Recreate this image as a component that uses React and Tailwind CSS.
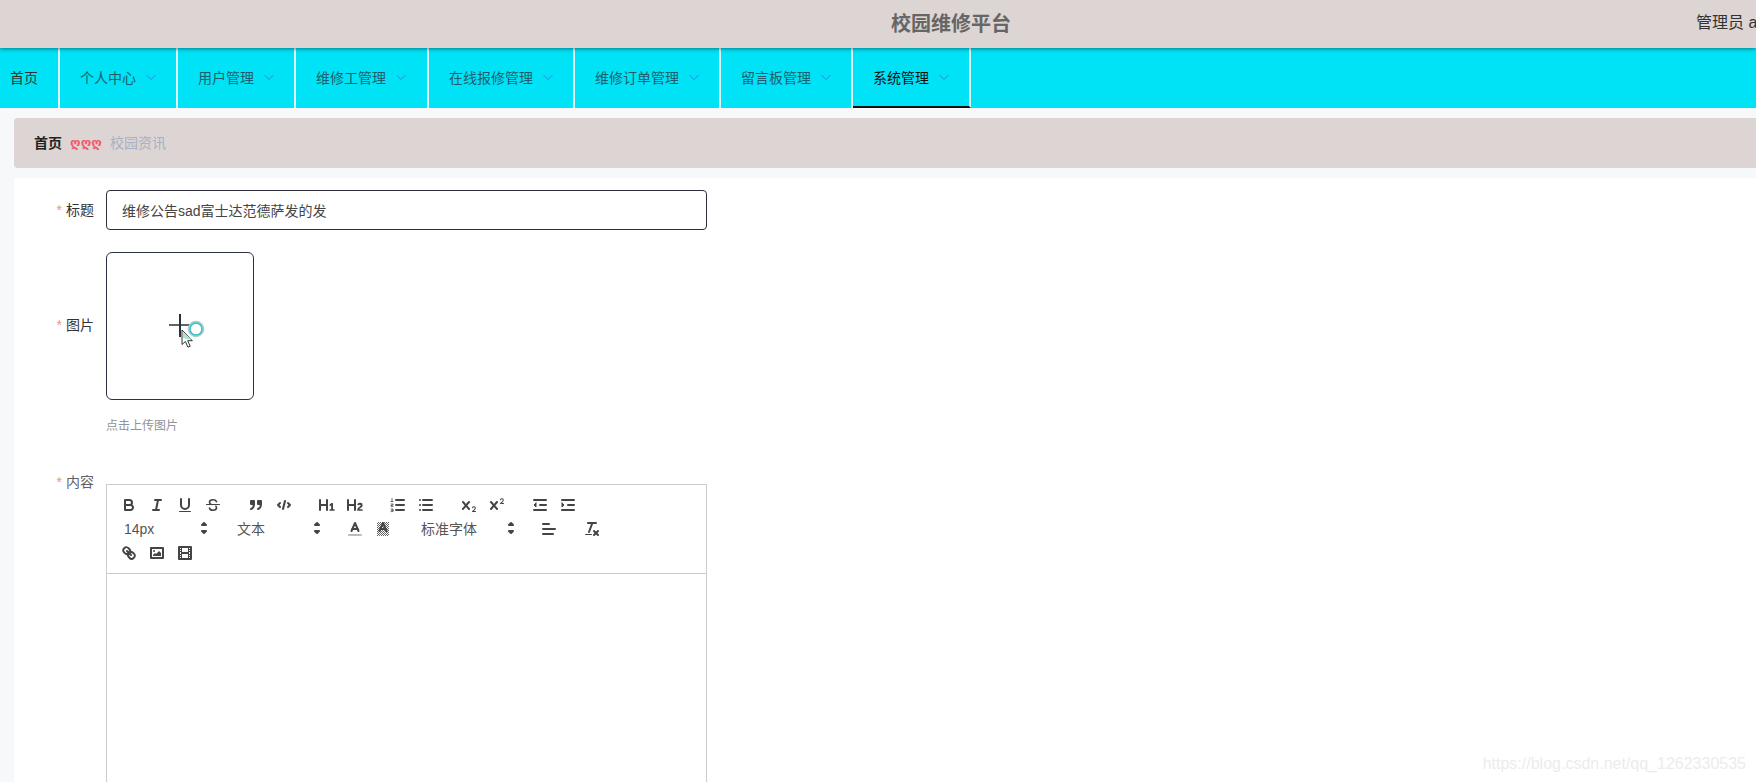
import React from 'react';

const fontStack = 'font-["Liberation_Sans","Noto_Sans_CJK_SC",sans-serif]';

const navItems = [
  { label: '个人中心', padding: 'px-5' },
  { label: '用户管理', padding: 'px-5' },
  { label: '维修工管理', padding: 'pl-5 pr-[21px]' },
  { label: '在线报修管理', padding: 'px-5' },
  { label: '维修订单管理', padding: 'px-5' },
  { label: '留言板管理', padding: 'px-5' },
  { label: '系统管理', padding: 'px-5', active: true }
];

const Chevron = () => (
  <svg width="10" height="10" viewBox="0 0 10 10" fill="none" stroke="#2f86e8" strokeWidth="1" className="-mt-[3px]">
    <polyline points="0.5 3 5 7.5 9.5 3" />
  </svg>
);

const Icon = ({ children }) => (
  <button className="w-7 h-6 px-[5px] py-[3px] shrink-0">
    <svg
      viewBox="0 0 18 18"
      width="18"
      height="18"
      fill="none"
      stroke="#444"
      strokeWidth="2"
      strokeLinecap="round"
      strokeLinejoin="round"
    >
      {children}
    </svg>
  </button>
);

const Solid = ({ d }) => <path d={d} fill="#444" stroke="none" />;

const Picker = ({ label, width }) => (
  <span className={`relative h-6 flex items-center pl-[9px] text-sm leading-6 text-[#555] ${width}`}>
    {label}
    <svg viewBox="0 0 18 18" width="18" height="18" className="absolute right-0 top-[3px]" fill="#444" stroke="#444" strokeWidth="2" strokeLinejoin="round">
      <polygon points="7 11 9 13 11 11 7 11" />
      <polygon points="7 5 9 3 11 5 7 5" />
    </svg>
  </span>
);

const Group = ({ children }) => <span className="flex mr-[15px]">{children}</span>;

const Toolbar = () => (
  <div className="border border-[#ccc] p-2 flex flex-wrap">
    <Group>
      <Icon>
        <path d="M5,4H9.5A2.5,2.5,0,0,1,12,6.5v0A2.5,2.5,0,0,1,9.5,9H5A0,0,0,0,1,5,9V4A0,0,0,0,1,5,4Z" />
        <path d="M5,9h5.5A2.5,2.5,0,0,1,13,11.5v0A2.5,2.5,0,0,1,10.5,14H5a0,0,0,0,1,0,0V9A0,0,0,0,1,5,9Z" />
      </Icon>
      <Icon>
        <line x1="7" x2="13" y1="4" y2="4" />
        <line x1="5" x2="11" y1="14" y2="14" />
        <line x1="8" x2="10" y1="14" y2="4" />
      </Icon>
      <Icon>
        <path d="M5,3V9a4.012,4.012,0,0,0,4,4H9a4.012,4.012,0,0,0,4-4V3" />
        <rect x="3" y="15" width="12" height="1" rx="0.5" ry="0.5" fill="#444" stroke="none" />
      </Icon>
      <Icon>
        <line x1="15.5" x2="2.5" y1="8.5" y2="8.5" strokeWidth="1" />
        <path strokeWidth="1.6" d="M12.5 5.6C12 4.3 10.7 3.8 9 3.8c-2 0-3.5 1-3.5 2.5 0 1 .6 1.7 1.6 2.1M5.5 12c.3 1.5 1.7 2.2 3.5 2.2 2 0 3.5-1 3.5-2.5 0-.6-.2-1.1-.6-1.5" />
      </Icon>
    </Group>
    <Group>
      <Icon>
        <rect x="4" y="5" width="3" height="3" fill="#444" />
        <rect x="11" y="5" width="3" height="3" fill="#444" />
        <path d="M7,8c0,4.031-3,5-3,5" />
        <path d="M14,8c0,4.031-3,5-3,5" />
      </Icon>
      <Icon>
        <polyline points="5 7 3 9 5 11" />
        <polyline points="13 7 15 9 13 11" />
        <line x1="10" x2="8" y1="5" y2="13" />
      </Icon>
    </Group>
    <Group>
      <Icon>
        <Solid d="M10,4V14a1,1,0,0,1-2,0V10H3v4a1,1,0,0,1-2,0V4A1,1,0,0,1,3,4V8H8V4a1,1,0,0,1,2,0Zm6.06787,9.209H14.98975V7.59863a.54085.54085,0,0,0-.605-.60547h-.62744a1.01119,1.01119,0,0,0-.748.29688L11.645,8.56641a.5435.5435,0,0,0-.022.8584l.28613.30762a.53861.53861,0,0,0,.84717.0332l.09912-.08789a1.2137,1.2137,0,0,0,.2417-.35254h.02246s-.01123.30859-.01123.60547V13.209H12.041a.54085.54085,0,0,0-.605.60547v.43945a.54085.54085,0,0,0,.605.60547h4.02686a.54085.54085,0,0,0,.605-.60547v-.43945A.54085.54085,0,0,0,16.06787,13.209Z" />
      </Icon>
      <Icon>
        <Solid d="M16.73975,13.81445v.43945a.54085.54085,0,0,1-.605.60547H11.855a.58392.58392,0,0,1-.64893-.60547V14.0127c0-2.90527,3.39941-3.42187,3.39941-4.55469a.77675.77675,0,0,0-.84717-.78125,1.17684,1.17684,0,0,0-.83594.38477c-.2749.26367-.561.374-.85791.13184l-.4292-.34082c-.30811-.24219-.38525-.51758-.1543-.81445a2.97155,2.97155,0,0,1,2.45361-1.17676,2.45393,2.45393,0,0,1,2.68408,2.40918c0,2.45312-3.1792,2.92676-3.27832,3.93848h2.79443A.54085.54085,0,0,1,16.73975,13.81445ZM9,3A.99974.99974,0,0,0,8,4V8H3V4A1,1,0,0,0,1,4V14a1,1,0,0,0,2,0V10H8v4a1,1,0,0,0,2,0V4A.99974.99974,0,0,0,9,3Z" />
      </Icon>
    </Group>
    <Group>
      <Icon>
        <line x1="7" x2="15" y1="4" y2="4" />
        <line x1="7" x2="15" y1="9" y2="9" />
        <line x1="7" x2="15" y1="14" y2="14" />
        <path strokeWidth="0.8" d="M3 2.5v3M2 5.5h2M2 8h2v1.2H2v1.2h2M2 13h2v2.6H2M2.4 14.3H4" />
      </Icon>
      <Icon>
        <line x1="6" x2="15" y1="4" y2="4" />
        <line x1="6" x2="15" y1="9" y2="9" />
        <line x1="6" x2="15" y1="14" y2="14" />
        <line x1="3" x2="3" y1="4" y2="4" />
        <line x1="3" x2="3" y1="9" y2="9" />
        <line x1="3" x2="3" y1="14" y2="14" />
      </Icon>
    </Group>
    <Group>
      <Icon>
        <Solid d="M15.5,15H13.861a3.858,3.858,0,0,0,1.914-2.975,1.8,1.8,0,0,0-1.6-1.751A1.921,1.921,0,0,0,12.021,11.7a0.50013,0.50013,0,1,0,.957.291h0a0.914,0.914,0,0,1,1.053-.725,0.81,0.81,0,0,1,.744.762c0,1.076-1.16971,1.86982-1.93971,2.43082A1.45639,1.45639,0,0,0,12,15.5a0.5,0.5,0,0,0,.5.5h3A0.5,0.5,0,0,0,15.5,15Z" />
        <Solid d="M9.65,5.241a1,1,0,0,0-1.409.108L6,7.964,3.759,5.349A1,1,0,0,0,2.192,6.59178Q2.2,6.6,2.241,6.651L4.684,9.5,2.241,12.35A1,1,0,0,0,3.71,13.70722q0.04-.04.078-0.0912L6,11.036l2.241,2.614a1,1,0,0,0,1.567-1.24277Q9.8,12.4,9.759,12.35L7.316,9.5,9.759,6.651A1,1,0,0,0,9.65,5.241Z" />
      </Icon>
      <Icon>
        <Solid d="M15.5,7H13.861a4.015,4.015,0,0,0,1.914-2.975,1.8,1.8,0,0,0-1.6-1.751A1.922,1.922,0,0,0,12.021,3.7a0.5,0.5,0,1,0,.957.291,0.917,0.917,0,0,1,1.053-.725,0.81,0.81,0,0,1,.744.762c0,1.077-1.164,1.925-1.934,2.486A1.423,1.423,0,0,0,12,7.5a0.5,0.5,0,0,0,.5.5h3A0.5,0.5,0,0,0,15.5,7Z" />
        <Solid d="M9.651,5.241a1,1,0,0,0-1.41.108L6,7.964,3.759,5.349a1,1,0,1,0-1.519,1.3L4.683,9.5,2.241,12.35a1,1,0,1,0,1.519,1.3L6,11.036l2.241,2.614a1,1,0,0,0,1.519-1.3L7.317,9.5,9.759,6.651A1,1,0,0,0,9.651,5.241Z" />
      </Icon>
    </Group>
    <Group>
      <Icon>
        <line x1="3" x2="15" y1="14" y2="14" />
        <line x1="3" x2="15" y1="4" y2="4" />
        <line x1="9" x2="15" y1="9" y2="9" />
        <polyline points="5 7 5 11 3 9 5 7" fill="#444" strokeWidth="1" />
      </Icon>
      <Icon>
        <line x1="3" x2="15" y1="14" y2="14" />
        <line x1="3" x2="15" y1="4" y2="4" />
        <line x1="9" x2="15" y1="9" y2="9" />
        <polyline points="3 7 3 11 5 9 3 7" fill="#444" strokeWidth="1" />
      </Icon>
    </Group>
    <Group><Picker label="14px" width="w-[98px]" /></Group>
    <Group><Picker label="文本" width="w-[98px]" /></Group>
    <Group>
      <Icon>
        <line x1="3" x2="15" y1="15" y2="15" stroke="#bbb" />
        <polyline points="5.5 11 9 3 12.5 11" />
        <line x1="11.63" x2="6.38" y1="9" y2="9" />
      </Icon>
      <Icon>
        <defs>
          <pattern id="dither" width="2" height="2" patternUnits="userSpaceOnUse">
            <rect width="1" height="1" fill="#666" stroke="none" />
            <rect x="1" y="1" width="1" height="1" fill="#666" stroke="none" />
          </pattern>
        </defs>
        <rect x="3" y="2" width="12" height="14" fill="url(#dither)" stroke="none" />
        <polyline points="5.5 11 9 3 12.5 11" />
        <line x1="11.63" x2="6.38" y1="9" y2="9" />
      </Icon>
    </Group>
    <Group><Picker label="标准字体" width="w-[108px]" /></Group>
    <Group>
      <Icon>
        <line x1="3" x2="15" y1="9" y2="9" />
        <line x1="3" x2="13" y1="14" y2="14" />
        <line x1="3" x2="9" y1="4" y2="4" />
      </Icon>
    </Group>
    <Group>
      <Icon>
        <line x1="5" x2="13" y1="3" y2="3" />
        <line x1="6" x2="9.35" y1="12" y2="3" />
        <line x1="11" x2="15" y1="11" y2="15" />
        <line x1="15" x2="11" y1="11" y2="15" />
        <rect x="2" y="14" width="7" height="1" rx="0.5" ry="0.5" fill="#444" stroke="none" />
      </Icon>
    </Group>
    <Group>
      <Icon>
        <line x1="7" x2="11" y1="7" y2="11" />
        <path d="M8.9,4.577a3.476,3.476,0,0,1,.36,4.679A3.476,3.476,0,0,1,4.577,8.9C3.185,7.5,2.035,6.4,4.217,4.217S7.5,3.185,8.9,4.577Z" />
        <path d="M13.423,9.1a3.476,3.476,0,0,0-4.679-.36,3.476,3.476,0,0,0,.36,4.679c1.392,1.392,2.5,2.542,4.679.36S14.815,10.5,13.423,9.1Z" />
      </Icon>
      <Icon>
        <rect x="3" y="4" width="12" height="10" />
        <circle cx="6" cy="7" r="1" fill="#444" stroke="none" />
        <polyline points="5 12 5 11 7 9 8 10 11 7 13 9 13 12 5 12" fill="#444" stroke="none" />
      </Icon>
      <Icon>
        <rect x="3" y="3" width="12" height="12" />
        <g fill="#444" stroke="none">
          <rect x="5" y="3" width="1" height="12" />
          <rect x="12" y="3" width="1" height="12" />
          <rect x="5" y="8" width="8" height="2" />
          <rect x="3" y="5" width="3" height="1" />
          <rect x="3" y="7" width="3" height="1" />
          <rect x="3" y="10" width="3" height="1" />
          <rect x="3" y="12" width="3" height="1" />
          <rect x="12" y="5" width="3" height="1" />
          <rect x="12" y="7" width="3" height="1" />
          <rect x="12" y="10" width="3" height="1" />
          <rect x="12" y="12" width="3" height="1" />
        </g>
      </Icon>
    </Group>
  </div>
);

// plus sign of the uploader, with the busy mouse pointer of the screenshot on it
const UploadPlus = () => (
  <svg width="60" height="60" viewBox="0 0 60 60" fill="none">
    <line x1="19" x2="40" y1="29" y2="29" stroke="#2b2f36" strokeWidth="1.5" />
    <line x1="30" x2="30" y1="18" y2="41" stroke="#2b2f36" strokeWidth="2" />
    <circle cx="46" cy="33" r="6.8" stroke="#a9cdd3" strokeWidth="3" />
    <circle cx="46" cy="33" r="6" stroke="#3cc4c4" strokeWidth="1.4" />
    <path d="M32 34v14.5l3.4-3 2.5 5.7 2.3-1-2.5-5.5h4.6Z" fill="#fff" stroke="#333" strokeWidth="1" strokeLinejoin="round" />
    <path d="M33 36.5v5.5l5.5 1.5 3-.2Z" fill="#a6e6d2" />
  </svg>
);

const Label = ({ children, dim }) => (
  <label className={`w-20 shrink-0 pr-3 h-10 leading-10 text-right text-sm ${dim ? 'text-[#606266]' : 'text-[#333]'}`}>
    <span className="text-[#f2937f] mr-1">*</span>
    {children}
  </label>
);

const App = () => {
  return (
    <div className={`w-[1756px] h-[782px] overflow-hidden relative bg-[#f6f8fa] ${fontStack}`}>
      {/* Header */}
      <div className="relative z-10 h-12 bg-[#ddd5d3] shadow-[0_1px_4px_rgba(0,0,0,0.45)] flex items-center">
        <div className="ml-[891px] text-xl font-bold text-[#666] leading-7 shrink-0">校园维修平台</div>
        <div className="ml-[685px] text-base text-[#333] whitespace-nowrap shrink-0 -mt-[2px]">管理员 admin</div>
      </div>

      {/* Nav */}
      <div className="h-[60px] bg-[#00e2f6] flex text-sm leading-[60px]">
        <div className="pl-[10px] pr-5 border-r-2 border-[#dff3f5] text-[#333]">首页</div>
        {navItems.map((item, index) => (
          <div
            key={index}
            className={`${item.padding} flex items-center gap-[10px] border-r-2 border-[#dff3f5] ${
              item.active ? 'text-[#111] border-b-2 border-b-[#111] pt-[2px]' : 'text-[#1f5f6b]'
            }`}
          >
            {item.label}
            <Chevron />
          </div>
        ))}
      </div>

      {/* Breadcrumb */}
      <div className="ml-[14px] mt-[10px] h-[50px] bg-[#ddd5d3] rounded-l flex items-center pl-[20px] text-sm">
        <span className="font-bold text-[#222]">首页</span>
        <span className="mx-2 w-[32px] text-center font-bold text-[#f4596e] font-['DejaVu_Sans'] text-[13px] whitespace-nowrap">ღღღ</span>
        <span className="text-[#a8b0c4]">校园资讯</span>
      </div>

      {/* Form */}
      <div className="ml-[14px] mt-[10px] h-[700px] bg-white pl-3 pt-3">
        <div className="flex">
          <Label>标题</Label>
          <input
            readOnly
            value="维修公告sad富士达范德萨发的发"
            className="w-[601px] h-10 px-[15px] border border-[#2b3038] rounded text-sm text-[#444] outline-none"
          />
        </div>

        <div className="flex mt-[22px]">
          <div className="h-[146px] flex items-center">
            <Label>图片</Label>
          </div>
          <div>
            <div className="w-[148px] h-[148px] border border-[#2b3245] rounded-md flex items-center justify-center">
              <UploadPlus />
            </div>
            <div className="mt-5 text-xs leading-3 text-[#909399]">点击上传图片</div>
          </div>
        </div>

        <div className="flex mt-[30px]">
          <Label dim>内容</Label>
          <div className="w-[601px] mt-[22px]">
            <Toolbar />
            <div className="h-[300px] border border-t-0 border-[#ccc]" />
          </div>
        </div>
      </div>

      {/* CSDN watermark */}
      <div className="absolute right-[10px] bottom-[9px] text-base leading-[18px] text-[#ececec]">
        https://blog.csdn.net/qq_1262330535
      </div>
    </div>
  );
};

export default App;
